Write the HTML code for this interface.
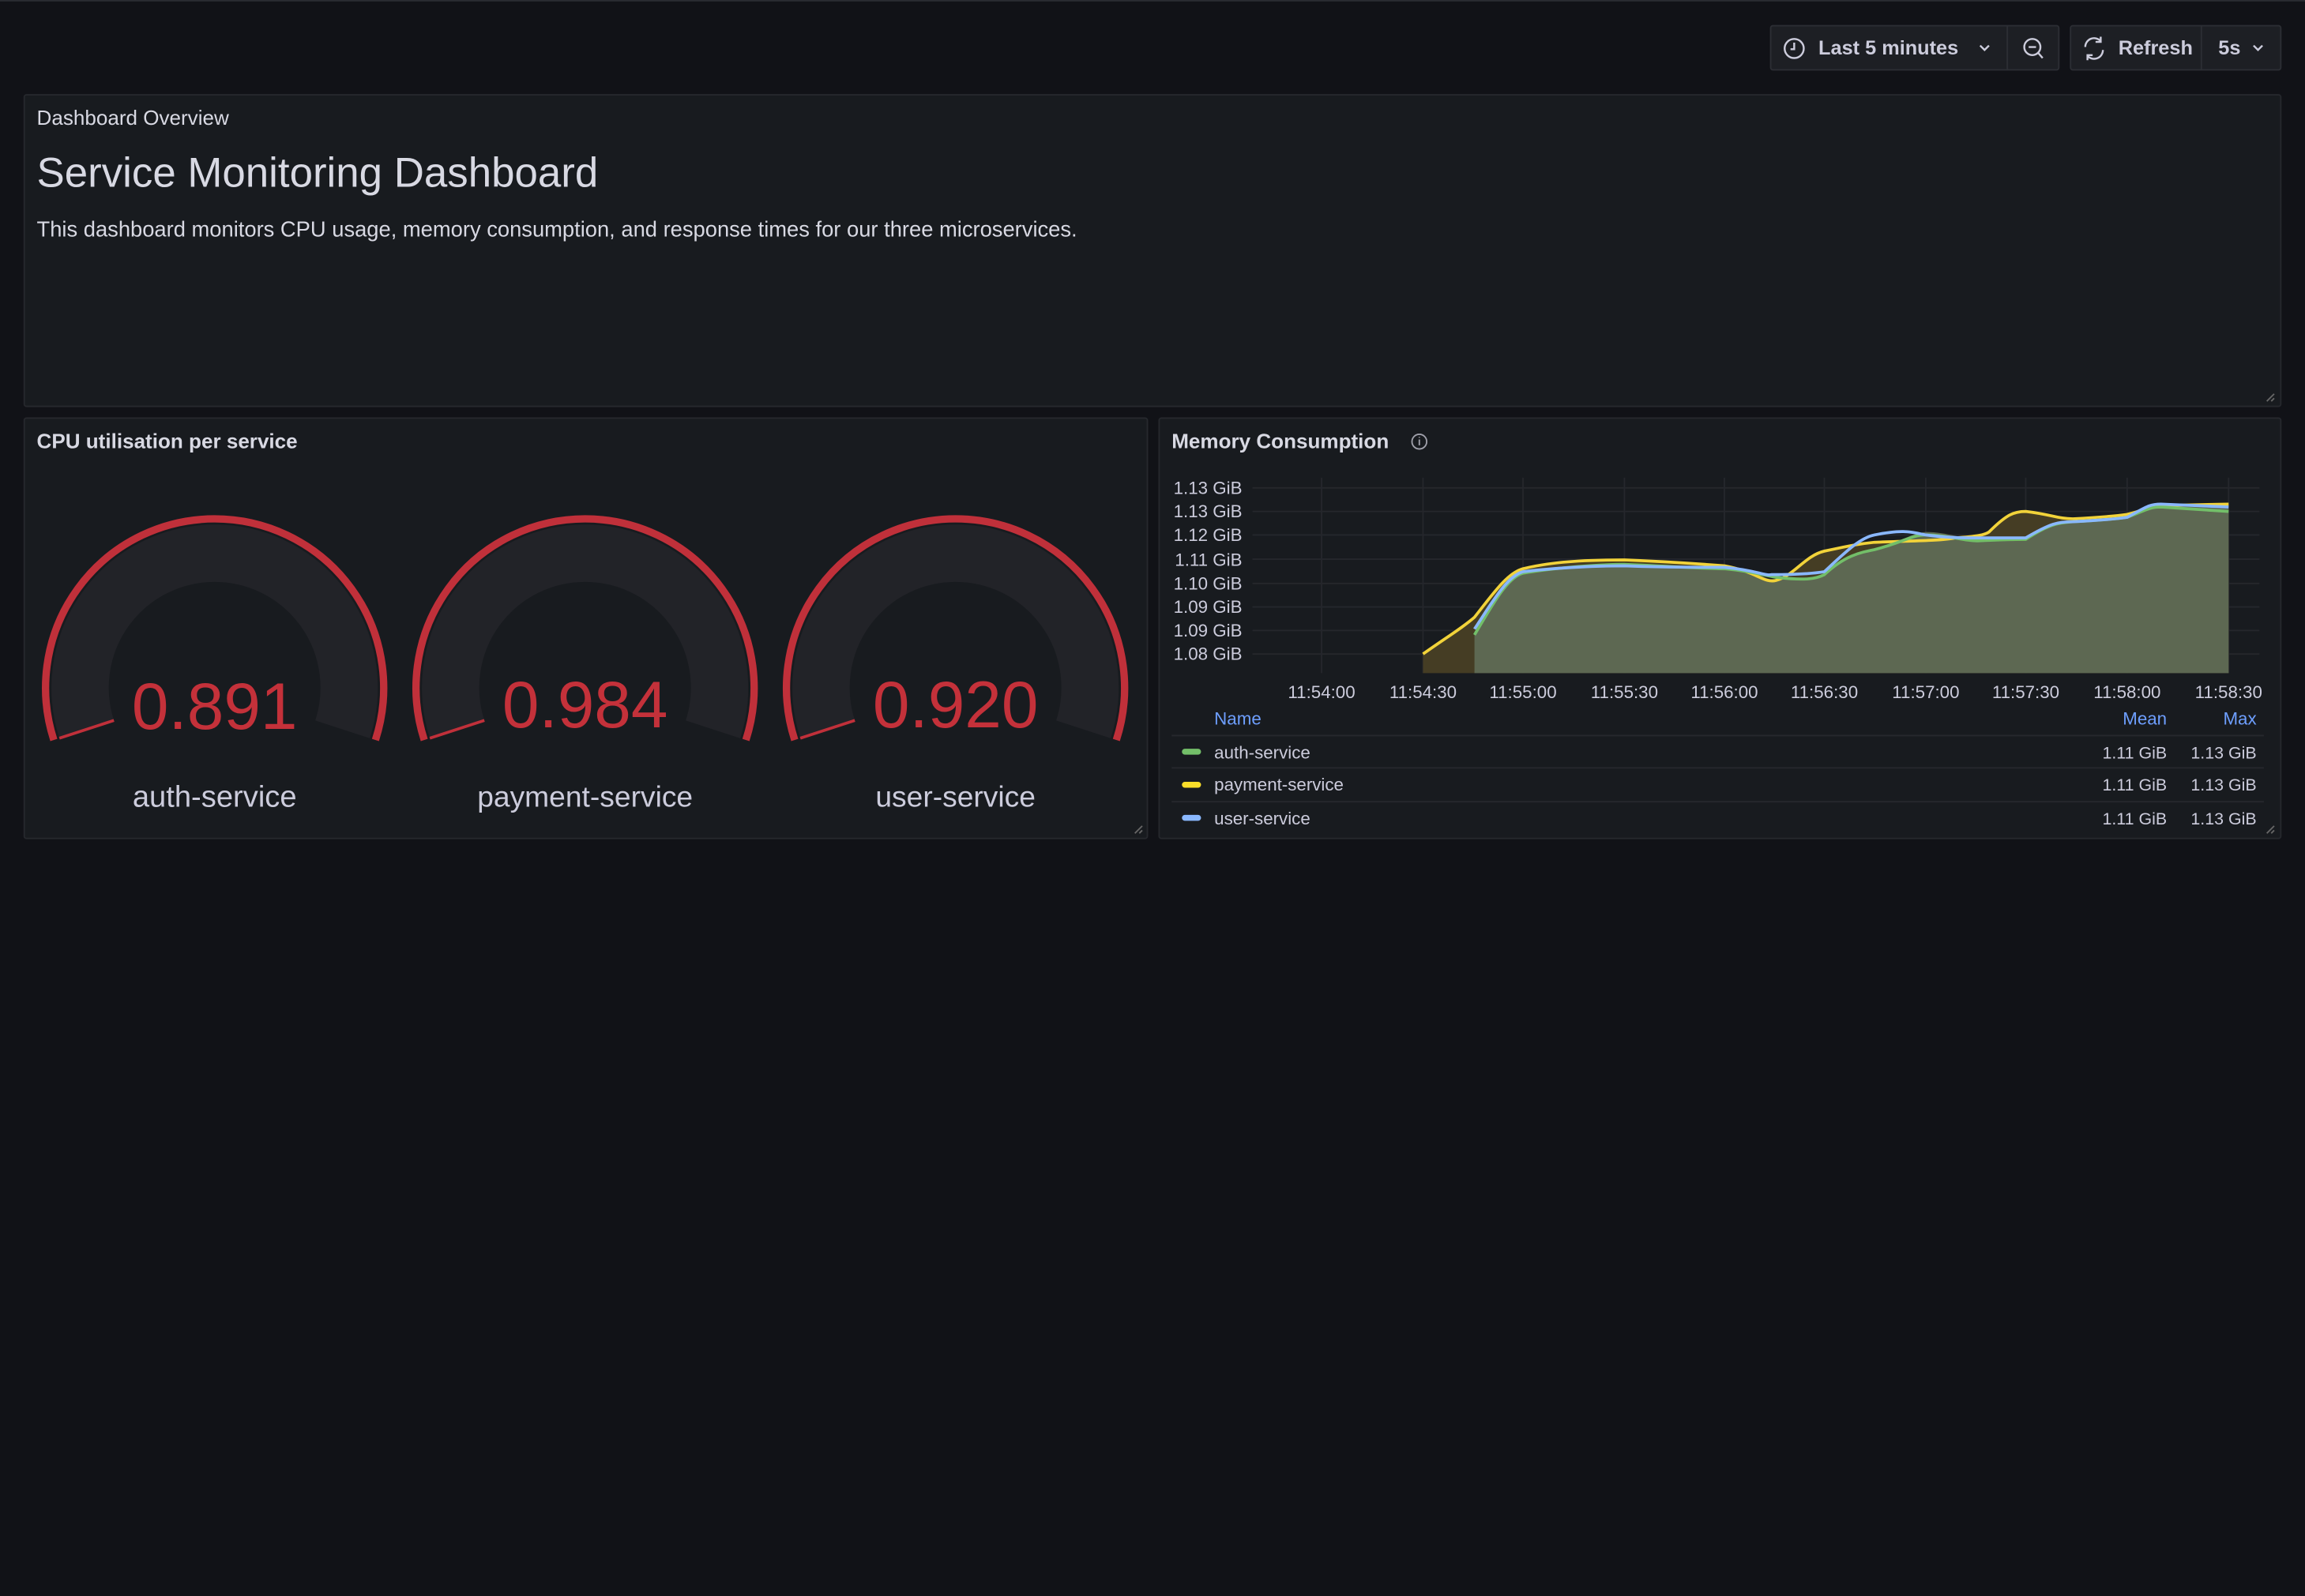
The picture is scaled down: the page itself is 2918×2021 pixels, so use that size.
<!DOCTYPE html>
<html><head><meta charset="utf-8"><style>
html,body{margin:0;padding:0;background:#111217;overflow:hidden}
body{width:2918px;height:2020px;font-family:"Liberation Sans",sans-serif;color:#ccccdc}
#w{position:absolute;left:0;top:0;width:1568px;height:1086px;transform:scale(1.8610);transform-origin:0 0}
.topline{position:absolute;left:0;top:0;width:1568px;height:1px;background:#2a2c32}
.btn{position:absolute;top:17px;height:31px;border:1px solid #2c2e34;background:#1d1f24;border-radius:2px;box-sizing:border-box}
.panel{position:absolute;background:#181b1f;border:1px solid #26282d;box-sizing:border-box;border-radius:2px}
.pt{position:absolute;left:8px;top:7px;font-size:14px;font-weight:bold;color:#d8d9e3}
.t{position:absolute;white-space:nowrap}
</style></head><body><div id="w">
<div class="topline"></div>
<div class="btn" style="left:1204px;width:197px"></div>
<div style="position:absolute;left:1365px;top:18px;width:1px;height:29px;background:#2c2e34"></div>
<div class="btn" style="left:1408px;width:144px"></div>
<div style="position:absolute;left:1497px;top:18px;width:1px;height:29px;background:#2c2e34"></div>
<svg style="position:absolute;left:0;top:0" width="1568" height="60" fill="none" stroke="#ccccdc" stroke-width="1.3">
<circle cx="1220.5" cy="33" r="6.5"/><path d="M1220.5 29v4.5h-2.5"/>
<path d="M1347 31l3 3 3-3"/>
<circle cx="1382.5" cy="32" r="5.5"/><path d="M1380 32h5M1386.5 36l3 3.5"/>
<path d="M1418.5 32a6 6 0 0 1 10.5-4M1429 25v3.5h-3.5M1430.5 34a6 6 0 0 1-10.5 4M1420 41v-3.5h3.5"/>
<path d="M1533 31l3 3 3-3"/>
</svg>
<div class="t" style="left:1237px;top:25px;font-size:13.6px;font-weight:bold">Last 5 minutes</div>
<div class="t" style="left:1441px;top:25px;font-size:13.6px;font-weight:bold">Refresh</div>
<div class="t" style="left:1509px;top:25px;font-size:13.6px;font-weight:bold">5s</div>

<div class="panel" style="left:16px;top:64px;width:1536px;height:213px">
<div class="t" style="left:8px;top:7px;font-size:14px;color:#d8d9e3">Dashboard Overview</div>
<div class="t" style="left:8px;top:37px;font-size:28.4px;color:#d8d9e3">Service Monitoring Dashboard</div>
<div class="t" style="left:8px;top:84px;font-size:14.7px;color:#d8d9e3">This dashboard monitors CPU usage, memory consumption, and response times for our three microservices.</div>
</div>

<div class="panel" style="left:16px;top:284px;width:765px;height:287px">
<div class="pt">CPU utilisation per service</div>
</div>
<div class="panel" style="left:788px;top:284px;width:764px;height:287px">
<div class="pt">Memory Consumption</div>
</div>

<svg style="position:absolute;left:0;top:0" width="1568" height="600">
<g id="g1">
<path d="M36.6 503.5A115 115 0 1 1 255.4 503.5" stroke="#c0303a" stroke-width="5" fill="none"/>
<path d="M59 496.3A91.5 91.5 0 1 1 233 496.3" stroke="#222328" stroke-width="39" fill="none"/>
<line x1="77.5" y1="490.2" x2="40.4" y2="502.3" stroke="#c0303a" stroke-width="2"/>
</g>
<use href="#g1" x="252"/><use href="#g1" x="504"/>
<g font-family="Liberation Sans" text-anchor="middle">
<text x="146" y="496" font-size="45" fill="#c4313a">0.891</text>
<text x="398" y="495" font-size="45" fill="#c4313a">0.984</text>
<text x="650" y="495" font-size="45" fill="#c4313a">0.920</text>
<text x="146" y="549" font-size="20.5" fill="#ccccdc">auth-service</text>
<text x="398" y="549" font-size="20" fill="#ccccdc">payment-service</text>
<text x="650" y="549" font-size="20" fill="#ccccdc">user-service</text>
</g>
<circle cx="965.5" cy="300.5" r="5" fill="none" stroke="#9fa0aa" stroke-width="1"/><path d="M965.5 299v4M965.5 297.3v0.6" stroke="#9fa0aa" stroke-width="1"/>
<path d="M772 567l5-5M775 567l2-2M1542 273l5-5M1545 273l2-2M1542 567l5-5M1545 567l2-2" stroke="#666" stroke-width="1"/>
<g stroke="#25272c" stroke-width="1">
<path d="M852 332H1537M852 348H1537M852 364H1537M852 380.5H1537M852 397H1537M852 413H1537M852 429H1537M852 445H1537"/>
<path d="M899 325V458M968 325V458M1036 325V458M1105 325V458M1173 325V458M1241 325V458M1310 325V458M1378 325V458M1447 325V458M1516 325V458"/>
</g>
<path d="M968 445C985 433 995 427 1003 420C1015 405 1025 390 1036 387C1060 381 1090 381 1105 381C1130 382 1160 384 1173 385C1195 389 1200 397 1208 395C1220 392 1228 378 1241 375C1260 371 1265 370 1275 369C1300 368 1320 368 1330 366C1345 365 1350 364 1353 362C1365 350 1370 348 1378 348C1395 350 1400 353 1410 353C1430 352 1440 351 1447 350C1460 347 1462 344 1470 344L1516 343V458H968Z" fill="#453d24"/>
<path d="M1003 430C1015 410 1025 392 1036 389C1060 385 1090 384 1105 384C1130 385 1160 386 1173 386C1195 388 1200 394 1205 394C1225 394 1235 393 1241 391C1255 378 1265 375 1275 373C1295 368 1300 363 1310 362C1325 362 1335 367 1345 367C1365 366 1370 366 1378 366C1395 356 1400 355 1410 354C1430 353 1440 352 1447 351C1460 346 1462 344 1470 344L1516 346V458H1003Z" fill="#5d6852"/>
<g fill="none" stroke-width="2">
<path d="M968 445C985 433 995 427 1003 420C1015 405 1025 390 1036 387C1060 381 1090 381 1105 381C1130 382 1160 384 1173 385C1195 389 1200 397 1208 395C1220 392 1228 378 1241 375C1260 371 1265 370 1275 369C1300 368 1320 368 1330 366C1345 365 1350 364 1353 362C1365 350 1370 348 1378 348C1395 350 1400 353 1410 353C1430 352 1440 351 1447 350C1460 347 1462 344 1470 344L1516 343" stroke="#f2d33a"/>
<path d="M1003 432C1015 412 1025 393 1036 390C1060 386 1090 384 1105 384C1130 385 1160 387 1173 387C1195 389 1205 393 1210 393C1228 395 1235 394 1241 391C1255 378 1265 376 1275 374C1295 369 1300 364 1310 364C1325 364 1335 368 1345 368C1365 367 1370 367 1378 367C1395 356 1400 356 1410 355C1430 354 1440 353 1447 352C1460 347 1462 345 1470 345L1516 348" stroke="#73bf69"/>
<path d="M1003 428C1015 410 1025 392 1036 389C1060 386 1090 385 1105 385C1130 386 1160 386 1173 386C1195 388 1200 392 1205 391C1225 391 1235 390 1241 389C1255 376 1265 366 1275 364C1295 360 1300 362 1310 364C1325 366 1335 366 1345 366C1365 366 1370 366 1378 366C1395 356 1400 355 1410 355C1430 354 1440 353 1447 352C1460 345 1462 343 1470 343L1516 345" stroke="#8ab8ff"/>
</g>
<g font-family="Liberation Sans" font-size="12" fill="#ccccdc" text-anchor="end">
<text x="845" y="336">1.13 GiB</text><text x="845" y="352">1.13 GiB</text><text x="845" y="368">1.12 GiB</text><text x="845" y="385">1.11 GiB</text><text x="845" y="401">1.10 GiB</text><text x="845" y="417">1.09 GiB</text><text x="845" y="433">1.09 GiB</text><text x="845" y="449">1.08 GiB</text>
</g>
<g font-family="Liberation Sans" font-size="12" fill="#ccccdc" text-anchor="middle">
<text x="899" y="475">11:54:00</text><text x="968" y="475">11:54:30</text><text x="1036" y="475">11:55:00</text><text x="1105" y="475">11:55:30</text><text x="1173" y="475">11:56:00</text><text x="1241" y="475">11:56:30</text><text x="1310" y="475">11:57:00</text><text x="1378" y="475">11:57:30</text><text x="1447" y="475">11:58:00</text><text x="1516" y="475">11:58:30</text>
</g>
<g font-family="Liberation Sans" font-size="12">
<text x="826" y="493" fill="#6e9fff">Name</text>
<text x="1474" y="493" fill="#6e9fff" text-anchor="end">Mean</text>
<text x="1535" y="493" fill="#6e9fff" text-anchor="end">Max</text>
<path d="M797 500.5H1540M797 522.5H1540M797 545.5H1540" stroke="#26282d"/>
<rect x="804" y="509.5" width="13" height="4" rx="2" fill="#73bf69"/>
<rect x="804" y="532" width="13" height="4" rx="2" fill="#fade2a"/>
<rect x="804" y="554.5" width="13" height="4" rx="2" fill="#8ab8ff"/>
<text x="826" y="516" fill="#ccccdc">auth-service</text>
<text x="826" y="538" fill="#ccccdc">payment-service</text>
<text x="826" y="561" fill="#ccccdc">user-service</text>
<g text-anchor="end" fill="#ccccdc" font-size="11.5">
<text x="1474" y="516">1.11 GiB</text><text x="1535" y="516">1.13 GiB</text>
<text x="1474" y="538">1.11 GiB</text><text x="1535" y="538">1.13 GiB</text>
<text x="1474" y="561">1.11 GiB</text><text x="1535" y="561">1.13 GiB</text>
</g>
</g>
</svg>
</div></body></html>
